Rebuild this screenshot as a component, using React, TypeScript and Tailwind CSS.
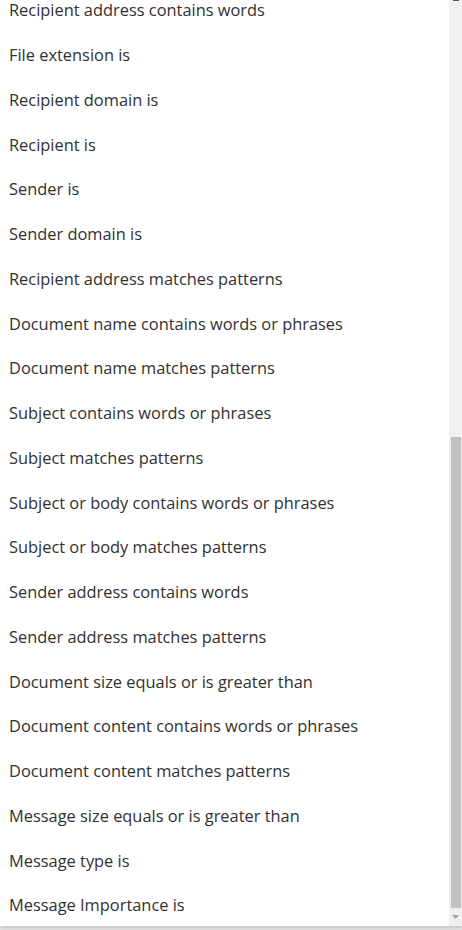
const conditions = [
  'Recipient address contains words',
  'File extension is',
  'Recipient domain is',
  'Recipient is',
  'Sender is',
  'Sender domain is',
  'Recipient address matches patterns',
  'Document name contains words or phrases',
  'Document name matches patterns',
  'Subject contains words or phrases',
  'Subject matches patterns',
  'Subject or body contains words or phrases',
  'Subject or body matches patterns',
  'Sender address contains words',
  'Sender address matches patterns',
  'Document size equals or is greater than',
  'Document content contains words or phrases',
  'Document content matches patterns',
  'Message size equals or is greater than',
  'Message type is',
  'Message Importance is',
];

export default function App() {
  return (
    <div className="h-[930px] w-[462px] bg-[#e9e9e9] overflow-hidden">
      <div className="flex h-[926px] bg-white shadow-[0_2px_4px_rgba(0,0,0,0.18)]">
        <div className="flex-1 overflow-hidden">
          {/* list is scrolled a little: the first row shows only its lower part */}
          <ul>
            {conditions.map((c, i) => (
              <li
                key={c}
                className={
                  i === 0
                    ? 'h-[32.75px] flex items-start pl-[9px] text-[16.4px] leading-[20px] text-[#323130] cursor-pointer whitespace-nowrap'
                    : 'h-[44.75px] flex items-center pl-[9px] text-[16.4px] leading-[20px] text-[#323130] cursor-pointer whitespace-nowrap'
                }
                style={{ fontFamily: '"Open Sans", "Noto Sans", sans-serif' }}
              >
                {c}
              </li>
            ))}
          </ul>
        </div>
        <div className="w-[13px] bg-[#f0f0f0] flex flex-col items-stretch">
          <div className="h-[437px] flex justify-center">
            <div className="h-[1px] w-[6px] bg-[#505050]" />
          </div>
          <div className="h-[471px] ml-[2px] mr-[1px] bg-[#c1c1c1]" />
          <div className="flex-1 flex justify-center pt-[7px]">
            <svg width="7" height="4" viewBox="0 0 7 4">
              <path d="M0 0h7L3.5 4z" fill="#a3a3a3" />
            </svg>
          </div>
        </div>
      </div>
    </div>
  );
}
